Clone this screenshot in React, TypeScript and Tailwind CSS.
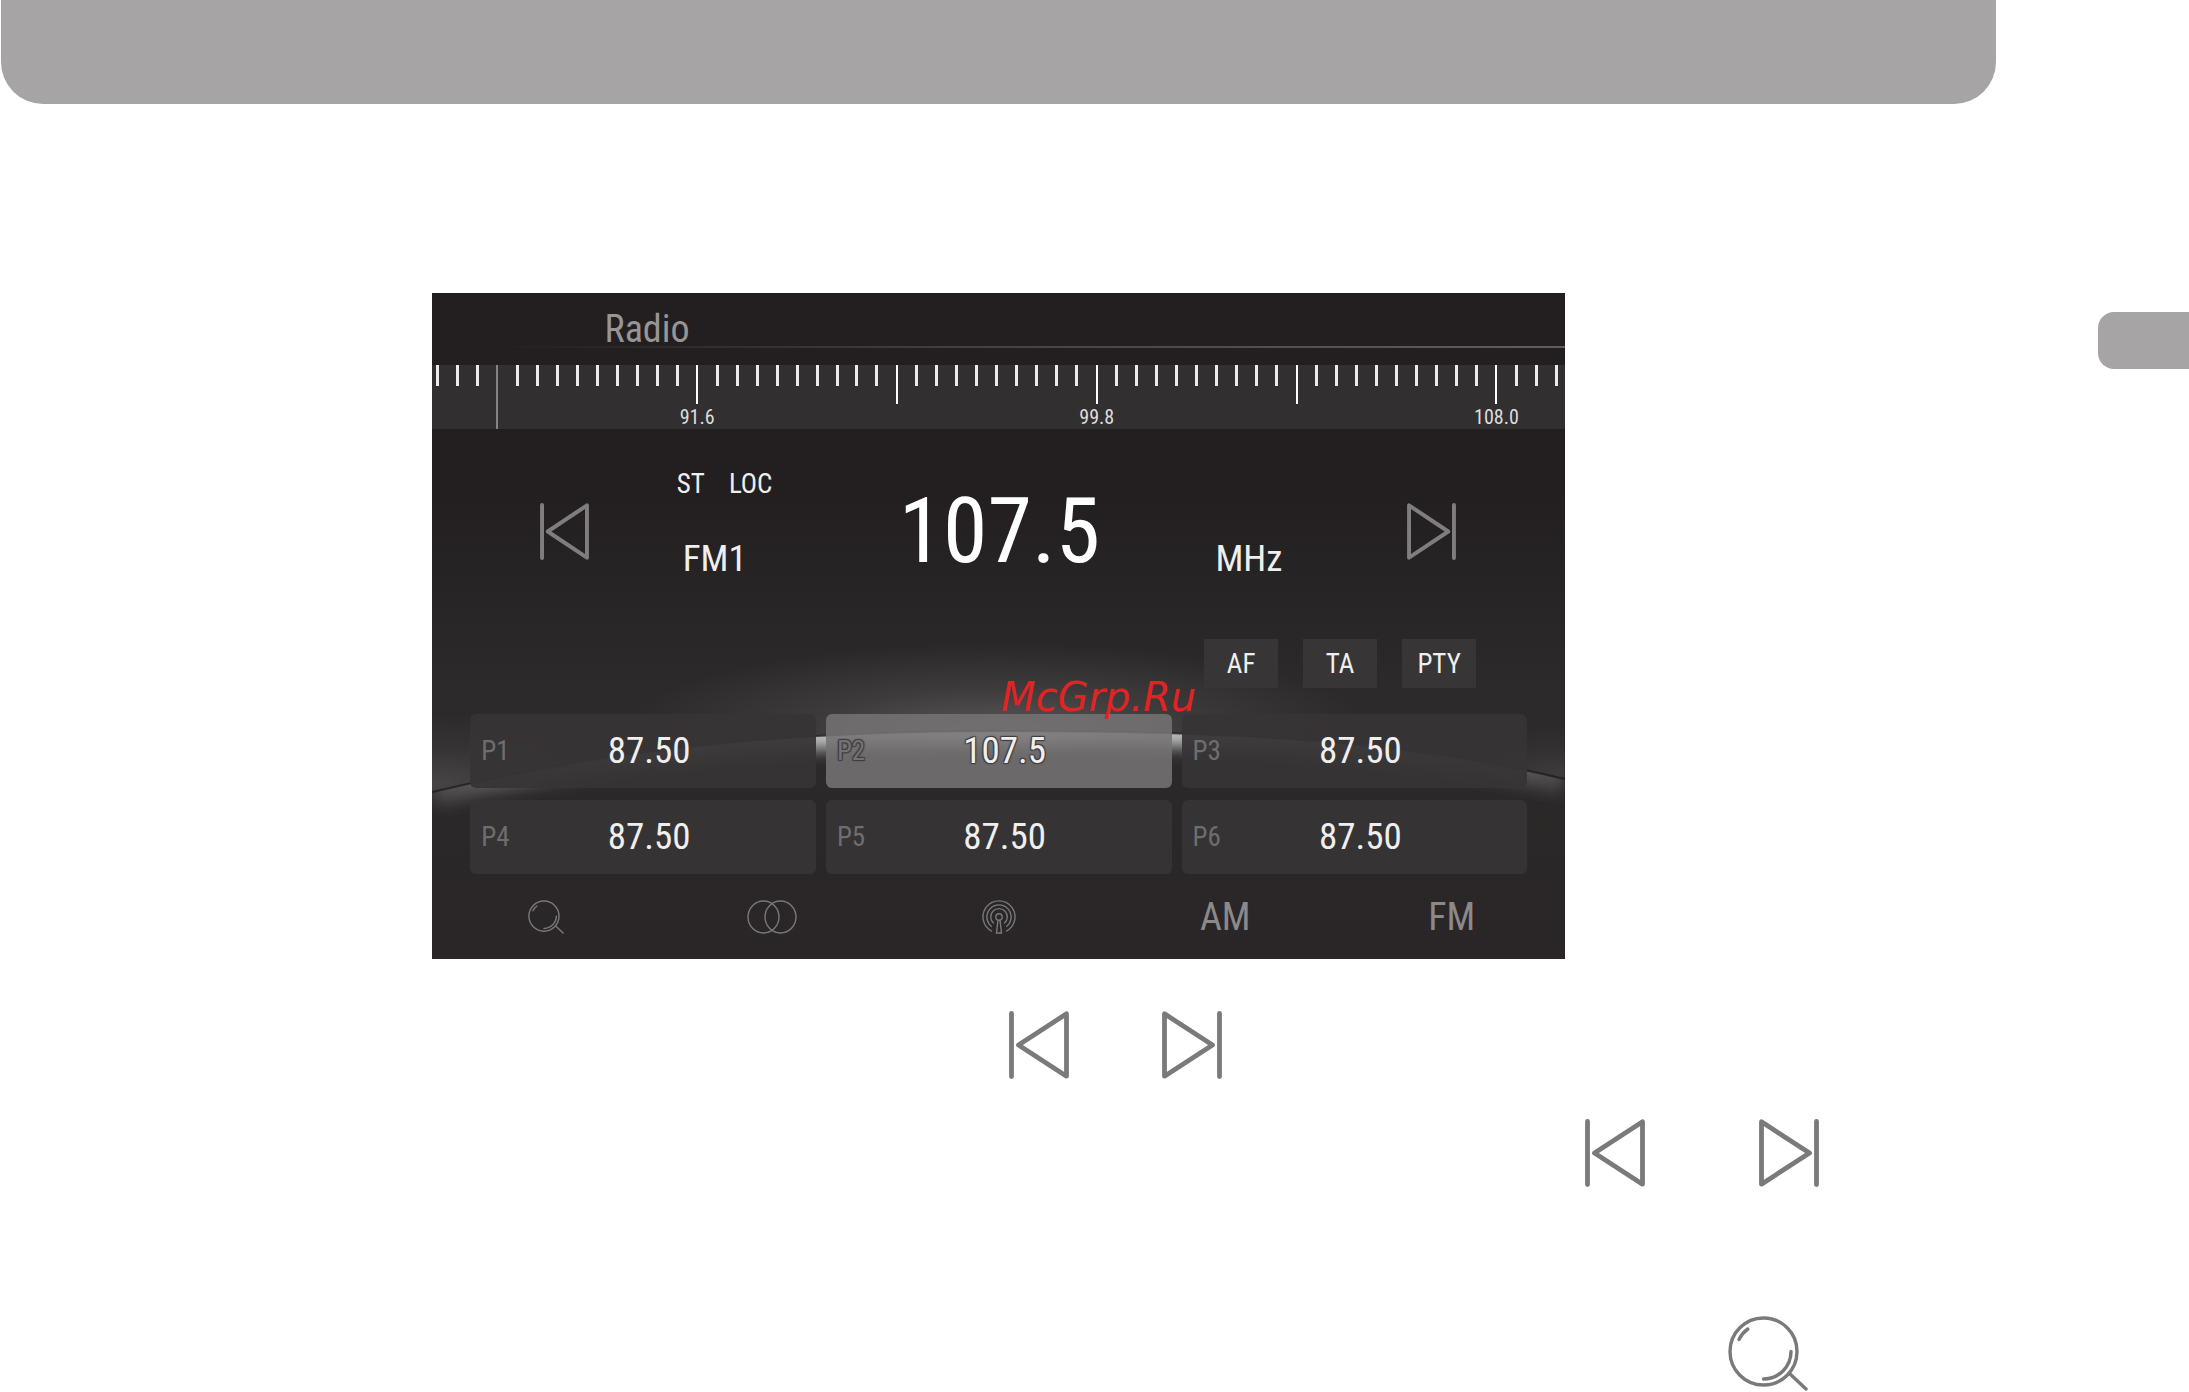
import { useState } from "react";

const TICK_LABELS: Record<number, string> = { 13: "91.6", 33: "99.8", 53: "108.0" };
const CURSOR_TICK = 3;

const PRESETS = [
  { name: "P1", value: "87.50" },
  { name: "P2", value: "107.5" },
  { name: "P3", value: "87.50" },
  { name: "P4", value: "87.50" },
  { name: "P5", value: "87.50" },
  { name: "P6", value: "87.50" },
];

function PreviousIcon({ className }: { className: string }) {
  return (
    <svg viewBox="0 0 60 68" preserveAspectRatio="none" fill="none" stroke="currentColor" strokeWidth="4.8" strokeLinecap="round" strokeLinejoin="round" className={className} aria-hidden="true">
      <path d="M2.5 2.5v63" />
      <path d="M57.5 2.8v62.4L9.5 34z" />
    </svg>
  );
}

function NextIcon({ className }: { className: string }) {
  return (
    <svg viewBox="0 0 60 68" preserveAspectRatio="none" fill="none" stroke="currentColor" strokeWidth="4.8" strokeLinecap="round" strokeLinejoin="round" className={className} aria-hidden="true">
      <path d="M57.5 2.5v63" />
      <path d="M2.5 2.8v62.4L50.5 34z" />
    </svg>
  );
}

function MagnifierIcon({ className, weight }: { className: string; weight: number }) {
  return (
    <svg viewBox="0 0 80 75" fill="none" stroke="currentColor" strokeWidth={weight} strokeLinecap="round" className={className} aria-hidden="true">
      <circle cx="35.5" cy="35.5" r="33.5" />
      <path d="M11 23.5A27 27 0 0 1 19.8 13" />
      <path d="M63 35.5A27.5 27.5 0 0 1 35.5 63" />
      <path d="M61.5 57.5L78 73" />
    </svg>
  );
}

function StereoIcon() {
  return (
    <svg viewBox="0 0 50 34" fill="none" stroke="currentColor" strokeWidth="1.4" className="h-[34px] w-[50px]" aria-hidden="true">
      <ellipse cx="16.5" cy="17" rx="15.5" ry="16" />
      <ellipse cx="33.5" cy="17" rx="15.5" ry="16" />
    </svg>
  );
}

function AntennaIcon() {
  return (
    <svg viewBox="0 0 34 34" fill="none" stroke="currentColor" strokeWidth="1.4" className="h-[34px] w-[34px]" aria-hidden="true">
      <path d="M10 31.3A16 16 0 1 1 24 31.3" />
      <path d="M9.8 26.7A12.1 12.1 0 1 1 24.2 26.7" />
      <path d="M11.8 23.4A8.3 8.3 0 1 1 22.2 23.4" />
      <circle cx="17" cy="17" r="3.2" />
      <path d="M16 20.2L14.5 33h5L18 20.2" />
    </svg>
  );
}

function Backdrop() {
  const arc = "M0 499C190 454 360 438 567 438S960 444 1134 486";
  return (
    <svg viewBox="0 0 1134 666" preserveAspectRatio="none" className="absolute inset-0 h-full w-full" aria-hidden="true">
      <defs>
        <linearGradient id="base" x1="0" y1="0" x2="0" y2="1">
          <stop offset="0" stopColor="#231f20" />
          <stop offset="0.3" stopColor="#231f20" />
          <stop offset="0.6" stopColor="#2c2a2a" />
          <stop offset="1" stopColor="#2a2627" />
        </linearGradient>
        <radialGradient id="halo">
          <stop offset="0" stopColor="#fff" stopOpacity="0.22" />
          <stop offset="0.5" stopColor="#fff" stopOpacity="0.08" />
          <stop offset="1" stopColor="#fff" stopOpacity="0" />
        </radialGradient>
        <linearGradient id="rim">
          <stop offset="0" stopColor="#4c4a4b" />
          <stop offset="0.34" stopColor="#c0c0c0" />
          <stop offset="0.5" stopColor="#fff" />
          <stop offset="0.66" stopColor="#c0c0c0" />
          <stop offset="1" stopColor="#4c4a4b" />
        </linearGradient>
        <clipPath id="above">
          <path d={`${arc}V0H0Z`} />
        </clipPath>
        <clipPath id="below">
          <path d={`${arc}V666H0Z`} />
        </clipPath>
        <filter id="soft" x="-10%" y="-100%" width="120%" height="300%">
          <feGaussianBlur stdDeviation="8" />
        </filter>
      </defs>
      <rect width="1134" height="666" fill="url(#base)" />
      <g clipPath="url(#above)">
        <ellipse cx="567" cy="440" rx="380" ry="90" fill="url(#halo)" />
        <ellipse cx="0" cy="490" rx="220" ry="70" fill="url(#halo)" opacity="0.6" />
        <ellipse cx="1134" cy="480" rx="160" ry="50" fill="url(#halo)" opacity="0.4" />
      </g>
      <g clipPath="url(#below)">
        <path d={arc} fill="none" stroke="url(#rim)" strokeWidth="26" filter="url(#soft)" />
      </g>
      <path d={arc} fill="none" stroke="#1c191a" strokeWidth="2" strokeOpacity="0.7" />
    </svg>
  );
}

function Scale() {
  return (
    <div className="flex h-16 items-start justify-between bg-[#322f30] pl-[5px] pr-2">
      {Array.from({ length: 57 }, (_, i) =>
        i === CURSOR_TICK ? (
          <div key={i} className="flex w-0 justify-center">
            <div className="h-16 w-[2px] shrink-0 bg-[#858384]" />
          </div>
        ) : i % 10 === CURSOR_TICK ? (
          <div key={i} className="flex w-0 flex-col items-center gap-[3px]">
            <div className="h-[39px] w-[2px] bg-white" />
            <span className="text-xl leading-5 text-[#dedddd]">{TICK_LABELS[i]}</span>
          </div>
        ) : (
          <div key={i} className="flex w-0 justify-center">
            <div className="h-[21px] w-[3px] shrink-0 bg-[#ebebeb]" />
          </div>
        ),
      )}
    </div>
  );
}

function RadioScreen() {
  const [active, setActive] = useState(1);
  return (
    <section aria-label="Radio" className="relative ml-[19.75%] w-[51.75%] shrink-0 overflow-hidden bg-[#231f20] font-['Roboto_Condensed','Liberation_Sans',sans-serif] text-[#efefef]">
      <Backdrop />
      <div className="relative">
        <header className="bg-[#231f20] pb-[17px]">
          <h1 className="pb-[2px] pl-[15.2%] pt-[21px] text-[38px] leading-[30px] text-[#979596]">Radio</h1>
          <div className="h-[2px] bg-linear-to-r from-[#231f20] from-5% via-[#454243] via-50% to-[#5f5d5e]" />
        </header>
        <Scale />

        <div className="grid grid-cols-[137fr_222fr_317fr_192fr_158fr] pl-[9.5%] pt-[41px]">
          <button type="button" aria-label="Previous station" className="self-center justify-self-start pt-4 text-[#7f7d7e]">
            <PreviousIcon className="h-[57px] w-[49px]" />
          </button>
          <div className="flex flex-col justify-between gap-[43px]">
            <div className="flex gap-6 text-[27px] leading-7">
              <span>ST</span>
              <span>LOC</span>
            </div>
            <span className="pl-[6px] text-[37px] leading-9">FM1</span>
          </div>
          <span className="self-center pt-4 text-[90px] leading-[90px] text-white">107.5</span>
          <span className="self-end text-[37px] leading-9">MHz</span>
          <button type="button" aria-label="Next station" className="self-center justify-self-start pt-4 text-[#7f7d7e]">
            <NextIcon className="h-[57px] w-[49px]" />
          </button>
        </div>

        <div className="mt-[62px] flex justify-end gap-[25px] pr-[89px]">
          {["AF", "TA", "PTY"].map((label) => (
            <button key={label} type="button" className="h-[49px] w-[74px] bg-[#383536] text-[27px] leading-7">
              {label}
            </button>
          ))}
        </div>

        <div className="mt-[26px] grid grid-cols-3 gap-x-[10px] gap-y-3 px-[38px]">
          {PRESETS.map((preset, i) => (
            <button
              key={preset.name}
              type="button"
              aria-pressed={i === active}
              onClick={() => setActive(i)}
              className={`flex h-[74px] items-center rounded-md pl-[11px] pr-[35px] ${i === active ? "bg-[#747273]/88 [text-shadow:1px_1px_1px_#403e3f,-1px_-1px_1px_#403e3f,1px_-1px_1px_#403e3f,-1px_1px_1px_#403e3f]" : "bg-[#373435]/94"}`}
            >
              <span className={`w-9 text-left text-[27px] leading-7 ${i === active ? "text-[#747273]" : "text-[#6f6d6e]"}`}>
                {preset.name}
              </span>
              <span className="flex-1 text-center text-[37px] leading-9">{preset.value}</span>
            </button>
          ))}
        </div>

        <nav aria-label="Radio functions" className="grid h-[85px] grid-cols-5 place-items-center text-[#7a7879]">
          <button type="button" aria-label="Search">
            <MagnifierIcon className="h-[34px] w-9" weight={3.2} />
          </button>
          <button type="button" aria-label="Stereo">
            <StereoIcon />
          </button>
          <button type="button" aria-label="Broadcast">
            <AntennaIcon />
          </button>
          <button type="button" className="text-[38px] leading-9 text-[#8b898a]">AM</button>
          <button type="button" className="text-[38px] leading-9 text-[#8b898a]">FM</button>
        </nav>
      </div>
      <span className="absolute left-[50.2%] top-[384px] font-['DejaVu_Sans',sans-serif] text-[40px] italic leading-10 text-[#e02424]">
        McGrp.Ru
      </span>
    </section>
  );
}

export default function App() {
  return (
    <main className="min-h-screen overflow-hidden bg-white text-[#7b797a]">
      <div className="ml-px h-[104px] w-[91.15%] rounded-b-[42px] bg-[#a6a4a5]" />
      <div className="mt-[189px] flex items-start">
        <RadioScreen />
        <div className="ml-auto mt-[19px] h-[57px] w-[91px] rounded-l-2xl bg-[#a6a4a5]" />
      </div>
      <div className="mt-[52px] flex gap-[93px] pl-[46.1%]">
        <PreviousIcon className="h-[68px] w-[60px]" />
        <NextIcon className="h-[68px] w-[60px]" />
      </div>
      <div className="mt-[40px] flex gap-[114px] pl-[72.4%]">
        <PreviousIcon className="h-[68px] w-[60px]" />
        <NextIcon className="h-[68px] w-[60px]" />
      </div>
      <div className="mt-[129px] pl-[78.95%]">
        <MagnifierIcon className="h-[75px] w-20" weight={3.4} />
      </div>
    </main>
  );
}
